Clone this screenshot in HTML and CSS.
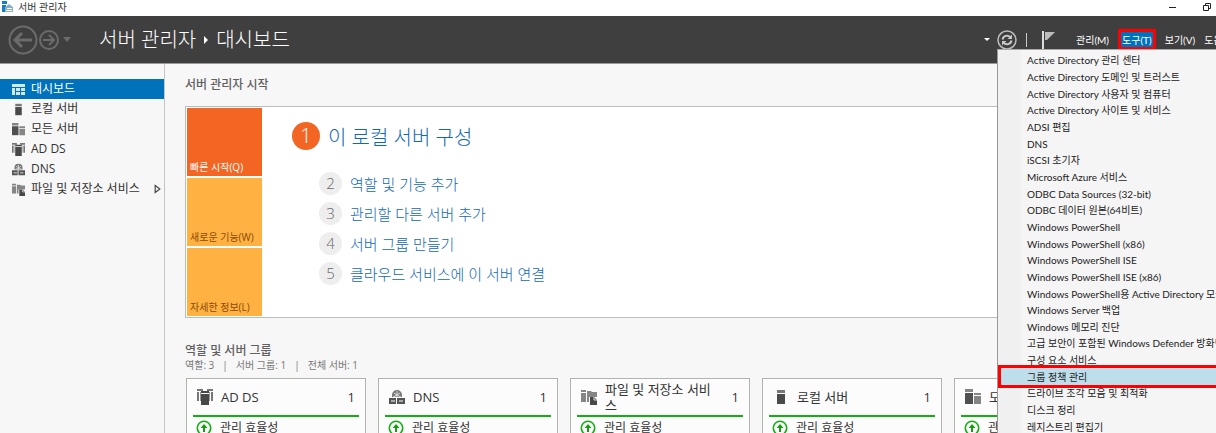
FILE: index.html
```html
<!DOCTYPE html>
<html lang="ko">
<head>
    <meta charset="UTF-8">
    <meta name="viewport" content="width=device-width, initial-scale=1.0">
    <title>서버 관리자</title>
    <link rel="stylesheet" href="styles.css">
</head>
<body>
    <svg class="sprite" aria-hidden="true">
        <symbol id="icon-dashboard" viewBox="0 0 13 13">
            <path d="M0 1h13v3H0zM0 5h3v7H0zM4 5h4v3H4zM9 5h4v3H9zM4 9h4v3H4zM9 9h4v3H9z" fill="#cfe9fb"/>
        </symbol>
        <symbol id="icon-server" viewBox="0 0 16 16">
            <path d="M4 1h8v3H4z" fill="#777"/>
            <path d="M4 5h8v10H4z" fill="#4a4a4a"/>
        </symbol>
        <symbol id="icon-servers" viewBox="0 0 16 16">
            <path d="M0 0h8v3H0zM9 4h7v2H9zM9 7h7v8H9z" fill="#858585"/>
            <path d="M0 4h8v11H0z" fill="#505050"/>
        </symbol>
        <symbol id="icon-adds" viewBox="0 0 16 16">
            <path d="M0 0h6v2H0zM10 0h6v2h-6zM0 3h2v9H0zM14 3h2v9h-2z" fill="#777"/>
            <path d="M3 3h1v9H3zM12 3h1v9h-1z" fill="#999"/>
            <path d="M4 2h8v2H4zM4 5h8v11H4z" fill="#484848"/>
        </symbol>
        <symbol id="icon-dns" viewBox="0 0 16 16">
            <path d="M3 8V6a5 5 0 0 1 10 0v2z" fill="#777"/>
            <path d="M5 4l3 2 3-2M8 2v6M4 8l4-2 4 2" fill="none" stroke="#ddd"/>
            <path d="M0 9h7v6H0zM8 9h8v6H8z" fill="#555"/>
            <path d="M2 11h4v2H2zM10 11h4v2h-4z" fill="#aaa"/>
        </symbol>
        <symbol id="icon-files" viewBox="0 0 16 16">
            <path d="M0 1h5v2H0zM0 4h5v9H0zM6 2h4l1 1h5v5H8v5H6z" fill="#858585"/>
            <path d="M9 8h4l3 3v5H9z" fill="#484848"/>
            <path d="M13 8v3h3" fill="none" stroke="#ddd"/>
        </symbol>
        <symbol id="icon-up" viewBox="0 0 16 16">
            <circle cx="8" cy="8" r="6.7" fill="#fff" stroke="#12b012" stroke-width="1.6"/>
            <path d="M8 4l3.500 4H9v4H7V8H4.500z" fill="#12a012"/>
        </symbol>
    </svg>

    <div class="app">
        <div class="titlebar">
            <svg class="app-icon" viewBox="0 0 12 12">
                <path d="M0 0h5v3H0zM0 4h4v7H0z" fill="#1580c4"/>
                <path d="M3 6l4-3 4 3v5H3z" fill="#8bafc6"/>
                <path d="M5 7h5v1H5zM4 9h6v1H4z" fill="#fff"/>
            </svg>
            <span>서버 관리자</span>
            <div class="window-buttons">
                <button type="button" aria-label="최소화">
                    <svg viewBox="0 0 10 10"><path d="M1 5.500h7" stroke="#222"/></svg>
                </button>
                <button type="button" aria-label="이전 크기로 복원">
                    <svg viewBox="0 0 10 10"><path d="M1.500 3.500h5v5h-5zM3.500 3.500v-2h5v5h-2" fill="none" stroke="#222"/></svg>
                </button>
            </div>
        </div>

        <header class="header">
            <button type="button" class="back" aria-label="뒤로">
                <svg viewBox="0 0 30 30">
                    <circle cx="15" cy="15" r="13.500" fill="none" stroke="#6b6b6b" stroke-width="2"/>
                    <path d="M24 15H8M14 8l-7 7 7 7" fill="none" stroke="#6b6b6b" stroke-width="3"/>
                </svg>
            </button>
            <button type="button" class="forward" aria-label="앞으로">
                <svg viewBox="0 0 20 20">
                    <circle cx="10" cy="10" r="9" fill="none" stroke="#6b6b6b" stroke-width="2"/>
                    <path d="M4 10h11M10 5l5 5-5 5" fill="none" stroke="#6b6b6b" stroke-width="2"/>
                </svg>
            </button>
            <button type="button" class="history" aria-label="기록">
                <svg viewBox="0 0 8 5"><path d="M0 0h8L4 5z" fill="#6b6b6b"/></svg>
            </button>
            <h1 class="breadcrumb">
                <span>서버 관리자</span>
                <svg viewBox="0 0 4 8"><path d="M0 0l4 4-4 4z" fill="#fff"/></svg>
                <span>대시보드</span>
            </h1>
            <div class="tools">
                <svg class="caret" viewBox="0 0 6 3"><path d="M0 0h6L3 3z" fill="#fff"/></svg>
                <button type="button" class="refresh" aria-label="새로 고침">
                    <svg viewBox="0 0 20 20">
                        <circle cx="10" cy="10" r="9" fill="none" stroke="#bdbdbd" stroke-width="1.500"/>
                        <path d="M5.500 9.500a4.500 4.500 0 0 1 8-2M14.500 10.500a4.500 4.500 0 0 1-8 2" fill="none" stroke="#c8c8c8" stroke-width="2"/>
                        <path d="M15 4.500V9h-4.500zM5 15.500V11h4.500z" fill="#c8c8c8"/>
                    </svg>
                </button>
                <span class="divider"></span>
                <button type="button" class="flag" aria-label="알림">
                    <svg viewBox="0 0 14 18"><path d="M0 0h2v18H0z" fill="#ddd"/><path d="M3 1h10L5 9H3z" fill="#bbb"/></svg>
                </button>
            </div>
            <nav class="menubar">
                <button type="button">관리(M)</button>
                <button type="button" class="open">도구(T)</button>
                <button type="button">보기(V)</button>
                <button type="button">도움말(H)</button>
            </nav>
        </header>

        <div class="body">
            <nav class="sidebar">
                <a href="#" class="selected"><svg><use href="#icon-dashboard"/></svg>대시보드</a>
                <a href="#"><svg><use href="#icon-server"/></svg>로컬 서버</a>
                <a href="#"><svg><use href="#icon-servers"/></svg>모든 서버</a>
                <a href="#"><svg><use href="#icon-adds"/></svg>AD DS</a>
                <a href="#"><svg><use href="#icon-dns"/></svg>DNS</a>
                <a href="#"><svg><use href="#icon-files"/></svg>파일 및 저장소 서비스
                    <svg class="expand" viewBox="0 0 6 8"><path d="M1 1l4 3-4 3z" fill="none" stroke="#444"/></svg>
                </a>
            </nav>

            <main class="content">
                <h2>서버 관리자 시작</h2>
                <section class="welcome">
                    <div class="tiles">
                        <button type="button" class="tile active">빠른 시작(Q)</button>
                        <button type="button" class="tile">새로운 기능(W)</button>
                        <button type="button" class="tile">자세한 정보(L)</button>
                    </div>
                    <ol class="steps">
                        <li class="first"><span class="num">1</span><a href="#">이 로컬 서버 구성</a></li>
                        <li><span class="num">2</span><a href="#">역할 및 기능 추가</a></li>
                        <li><span class="num">3</span><a href="#">관리할 다른 서버 추가</a></li>
                        <li><span class="num">4</span><a href="#">서버 그룹 만들기</a></li>
                        <li><span class="num">5</span><a href="#">클라우드 서비스에 이 서버 연결</a></li>
                    </ol>
                </section>

                <h2 class="groups-title">역할 및 서버 그룹</h2>
                <p class="summary"><span>역할: 3</span><span>|</span><span>서버 그룹: 1</span><span>|</span><span>전체 서버: 1</span></p>
                <div class="cards">
                    <article class="card">
                        <div class="card-head"><svg><use href="#icon-adds"/></svg><h3>AD DS</h3><span>1</span></div>
                        <a href="#" class="card-row"><svg><use href="#icon-up"/></svg>관리 효율성</a>
                    </article>
                    <article class="card">
                        <div class="card-head"><svg><use href="#icon-dns"/></svg><h3>DNS</h3><span>1</span></div>
                        <a href="#" class="card-row"><svg><use href="#icon-up"/></svg>관리 효율성</a>
                    </article>
                    <article class="card">
                        <div class="card-head"><svg><use href="#icon-files"/></svg><h3>파일 및 저장소 서비스</h3><span>1</span></div>
                        <a href="#" class="card-row"><svg><use href="#icon-up"/></svg>관리 효율성</a>
                    </article>
                    <article class="card">
                        <div class="card-head"><svg><use href="#icon-server"/></svg><h3>로컬 서버</h3><span>1</span></div>
                        <a href="#" class="card-row"><svg><use href="#icon-up"/></svg>관리 효율성</a>
                    </article>
                    <article class="card">
                        <div class="card-head"><svg><use href="#icon-servers"/></svg><h3>모든 서버</h3><span>1</span></div>
                        <a href="#" class="card-row"><svg><use href="#icon-up"/></svg>관리 효율성</a>
                    </article>
                </div>
            </main>
        </div>

        <div class="menu">
            <button type="button">Active Directory 관리 센터</button>
            <button type="button">Active Directory 도메인 및 트러스트</button>
            <button type="button">Active Directory 사용자 및 컴퓨터</button>
            <button type="button">Active Directory 사이트 및 서비스</button>
            <button type="button">ADSI 편집</button>
            <button type="button">DNS</button>
            <button type="button">iSCSI 초기자</button>
            <button type="button">Microsoft Azure 서비스</button>
            <button type="button">ODBC Data Sources (32-bit)</button>
            <button type="button">ODBC 데이터 원본(64비트)</button>
            <button type="button">Windows PowerShell</button>
            <button type="button">Windows PowerShell (x86)</button>
            <button type="button">Windows PowerShell ISE</button>
            <button type="button">Windows PowerShell ISE (x86)</button>
            <button type="button">Windows PowerShell용 Active Directory 모듈</button>
            <button type="button">Windows Server 백업</button>
            <button type="button">Windows 메모리 진단</button>
            <button type="button">고급 보안이 포함된 Windows Defender 방화벽</button>
            <button type="button">구성 요소 서비스</button>
            <button type="button" class="current">그룹 정책 관리</button>
            <button type="button">드라이브 조각 모음 및 최적화</button>
            <button type="button">디스크 정리</button>
            <button type="button">레지스트리 편집기</button>
        </div>
    </div>
</body>
</html>
```

FILE: styles.css
```css
* {
    box-sizing: border-box;
}
body {
    margin: 0;
    font-family: "Open Sans", "Noto Sans CJK KR", sans-serif;
    font-size: 12px;
    color: #333;
    background-color: #f7f7f7;
}
button {
    font-family: inherit;
    font-size: inherit;
    color: inherit;
    background: none;
    border: none;
    padding: 0;
    white-space: nowrap;
}
a {
    color: inherit;
    text-decoration: none;
}
svg {
    display: block;
    flex: none;
}
.sprite {
    position: absolute;
    width: 0;
    height: 0;
}
.app {
    position: relative;
    display: flex;
    flex-direction: column;
    height: 100vh;
    overflow: hidden;
}

/* Title bar */
.titlebar {
    flex: none;
    display: flex;
    align-items: center;
    height: 16px;
    padding: 0 4px 2px 2px;
    gap: 4px;
    font-size: 10px;
    line-height: 14px;
    background-color: #fff;
}
.app-icon {
    width: 12px;
    height: 12px;
}
.window-buttons {
    display: flex;
    gap: 24px;
    margin-left: auto;
}
.window-buttons svg {
    width: 10px;
    height: 10px;
}

/* Header */
.header {
    flex: none;
    display: flex;
    align-items: center;
    height: 48px;
    padding-left: 8px;
    color: #fff;
    background-color: #3f3f3f;
    border-bottom: 1px solid #999;
}
.back svg {
    width: 30px;
    height: 30px;
}
.forward svg {
    width: 20px;
    height: 20px;
}
.forward {
    margin-left: 1px;
}
.history {
    margin-left: 4px;
}
.history svg {
    width: 8px;
    height: 5px;
}
.breadcrumb {
    display: flex;
    align-items: center;
    gap: 8px;
    margin: 0 0 0 28px;
    font-size: 20px;
    font-weight: 300;
    line-height: 28px;
}
.breadcrumb svg {
    width: 4px;
    height: 8px;
}
.tools {
    display: flex;
    align-items: center;
    margin-left: auto;
}
.caret {
    width: 6px;
    height: 3px;
    margin-right: 7px;
}
.refresh svg {
    width: 20px;
    height: 20px;
}
.divider {
    width: 1px;
    height: 14px;
    margin: 0 15px 0 9px;
    background-color: #ccc;
}
.flag svg {
    width: 14px;
    height: 18px;
}
.menubar {
    flex: none;
    display: flex;
    align-items: center;
    width: 140px;
    gap: 9px;
    margin-left: 20px;
    overflow: hidden;
    font-family: Lato, "Noto Sans CJK KR", sans-serif;
    font-size: 10px;
    line-height: 14px;
}
.menubar .open {
    padding: 0 1px;
    background-color: #0072bc;
    border: 3px solid #f00;
}

/* Sidebar */
.body {
    flex: 1;
    display: flex;
    min-height: 0;
}
.sidebar {
    flex: none;
    width: 165px;
    padding-top: 15px;
    border-right: 1px solid #c4c4c4;
}
.sidebar a {
    display: flex;
    align-items: center;
    gap: 6px;
    height: 20px;
    padding-left: 12px;
    line-height: 20px;
    white-space: nowrap;
}
.sidebar svg {
    width: 13px;
    height: 13px;
}
.sidebar .selected {
    color: #fff;
    background-color: #0072bc;
}
.sidebar .expand {
    width: 7px;
    height: 10px;
    margin: 0 3px 0 auto;
}

/* Dashboard */
.content {
    flex: 1;
    min-width: 0;
    padding: 12px 0 0 20px;
    overflow: hidden;
}
.content h2 {
    margin: 0;
    font-size: 12px;
    font-weight: 500;
    line-height: 18px;
    color: #606060;
}
.welcome {
    display: flex;
    margin-top: 12px;
    padding: 1px;
    background-color: #fff;
    border: 1px solid #bcbcbc;
}
.tiles {
    display: flex;
    flex-direction: column;
    gap: 2px;
    width: 75px;
}
.tile {
    display: flex;
    align-items: flex-end;
    height: 68px;
    padding: 0 0 2px 3px;
    font-size: 10px;
    line-height: 14px;
    color: #8a4b08;
    background-color: #ffb142;
}
.tile.active {
    color: #fff;
    background-color: #f26522;
}
.steps {
    margin: 0;
    padding: 12px 0 0 30px;
    list-style: none;
}
.steps li {
    display: flex;
    align-items: center;
    gap: 8px;
    height: 30px;
    padding-left: 27px;
    font-size: 15px;
    font-weight: 300;
    color: #1268b3;
}
.steps .first {
    height: 32px;
    margin-bottom: 16px;
    padding-left: 0;
    font-size: 20px;
}
.num {
    width: 23px;
    border-radius: 50%;
    line-height: 23px;
    text-align: center;
    color: #666;
    background-color: #eee;
}
.first .num {
    width: 28px;
    line-height: 28px;
    color: #fff;
    background-color: #f26522;
}
.content .groups-title {
    margin-top: 24px;
}
.summary {
    display: flex;
    gap: 8px;
    margin: 0;
    font-size: 10px;
    line-height: 10px;
    color: #777;
}

/* Role cards */
.cards {
    display: flex;
    gap: 12px;
    margin: 8px 0 0 1px;
}
.card {
    flex: none;
    width: 180px;
    height: 180px;
    padding: 0 6px;
    background-color: #fcfcfc;
    border: 1px solid #b0b5b0;
}
.card-head {
    display: flex;
    align-items: center;
    height: 38px;
    padding: 0 4px;
    gap: 8px;
    font-size: 13px;
    line-height: 16px;
    border-bottom: 2px solid #12b012;
}
.card-head h3 {
    flex: 1;
    margin: 0;
    padding-right: 8px;
    font-size: 13px;
    font-weight: 400;
    word-break: break-all;
}
.card-head svg,
.card-row svg {
    width: 16px;
    height: 16px;
}
.card-row {
    display: flex;
    align-items: center;
    gap: 8px;
    padding: 1px 3px;
    line-height: 20px;
}

/* Tools menu */
.menu {
    position: absolute;
    top: 49px;
    right: 0;
    bottom: -2px;
    display: flex;
    flex-direction: column;
    width: 219px;
    padding: 2px 0 0 3px;
    overflow: hidden;
    font-family: Lato, "Noto Sans CJK KR", sans-serif;
    font-size: 10px;
    color: #222;
    background: linear-gradient(to right, #f0f0f0 23px, #f5f5f5 23px);
    border-top: 1px solid #aaa;
    border-left: 1px solid #999;
}
.menu button {
    flex: 1;
    padding-left: 26px;
    line-height: 14px;
    text-align: left;
}
.menu .current {
    background-color: #bfdeec;
    outline: 3px solid #f00;
}
```
